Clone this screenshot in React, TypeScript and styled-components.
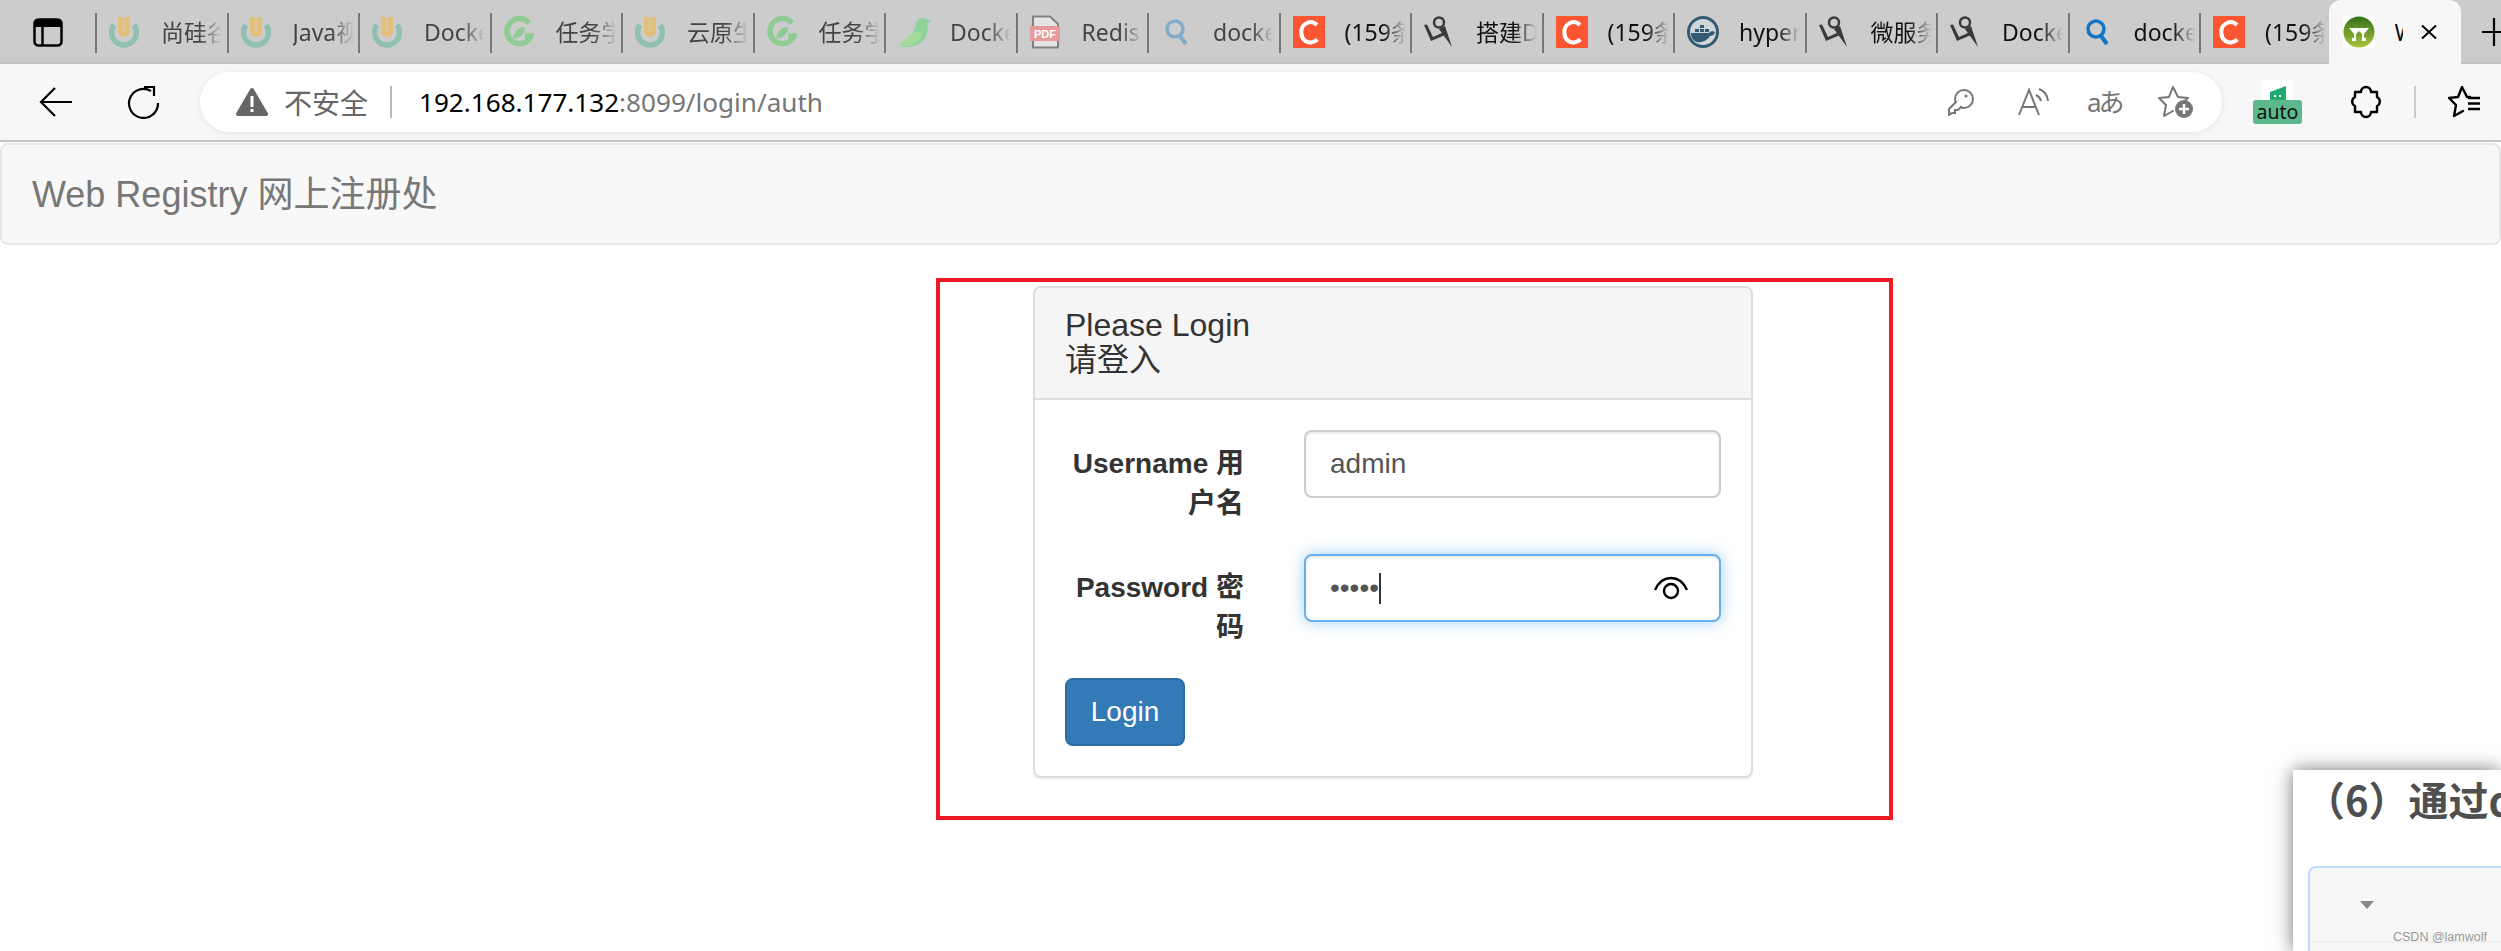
import * as React from 'react'
import styled, { createGlobalStyle } from 'styled-components'

const GlobalStyle = createGlobalStyle`
  html, body {
    margin: 0;
    padding: 0;
    background: #fff;
    font-family: "Liberation Sans", "Noto Sans CJK SC", sans-serif;
  }
`

type IconKind = 'u' | 'g' | 'bird' | 'pdf' | 'searchMuted' | 'search' | 'c' | 'y' | 'whale'

const tabs: { kind: IconKind; title: string; dim?: boolean }[] = [
  { kind: 'u', title: '尚硅谷', dim: true },
  { kind: 'u', title: 'Java视频', dim: true },
  { kind: 'u', title: 'Docker', dim: true },
  { kind: 'g', title: '任务学习', dim: true },
  { kind: 'u', title: '云原生', dim: true },
  { kind: 'g', title: '任务学习', dim: true },
  { kind: 'bird', title: 'Docker', dim: true },
  { kind: 'pdf', title: 'Redis', dim: true },
  { kind: 'searchMuted', title: 'docker', dim: true },
  { kind: 'c', title: '(159条' },
  { kind: 'y', title: '搭建D' },
  { kind: 'c', title: '(159条' },
  { kind: 'whale', title: 'hyper' },
  { kind: 'y', title: '微服务' },
  { kind: 'y', title: 'Docker' },
  { kind: 'search', title: 'docker' },
  { kind: 'c', title: '(159条' },
]

const Favicon = ({ kind }: { kind: IconKind }) => {
  switch (kind) {
    case 'u':
      return (
        <svg width="30" height="32" viewBox="0 0 30 32">
          <path d="M5 9 A12.500 12.500 0 1 0 25 9" fill="none" stroke="#8fc0b0" strokeWidth="5.500" />
          <path d="M9 1 V15 a6 6 0 0 0 12 0 V1 Z" fill="#e4bf7a" />
          <path d="M13.500 1 V14 a1.500 1.500 0 0 0 3 0 V1 Z" fill="#dcc596" />
        </svg>
      )
    case 'g':
      return (
        <svg width="30" height="32" viewBox="0 0 30 32">
          <path d="M25 7 A12.500 12.500 0 1 0 27 20 L21 20" fill="none" stroke="#90cb94" strokeWidth="5.500" />
          <path d="M9 22 C11 14 16 11 21 11 C21 18 16 23 9 22 Z" fill="#90cb94" />
        </svg>
      )
    case 'bird':
      return (
        <svg width="34" height="32" viewBox="0 0 34 32">
          <path d="M1 31 C10 27 15 18 18 8 C19 2 25 1 28 3 L33 5 L29 8 C32 20 24 30 11 31 Z" fill="#8ed39b" />
          <path d="M1 31 C7 21 15 15 24 16 C24 25 15 31 1 31 Z" fill="#a3da9b" />
        </svg>
      )
    case 'pdf':
      return (
        <svg width="30" height="34" viewBox="0 0 30 34">
          <path d="M3 1.500 H20 L28 9 V32.500 H3 Z" fill="#e4e4e4" stroke="#808080" strokeWidth="2" />
          <rect x="0" y="11" width="30" height="15" fill="#e59b9c" />
          <text x="15" y="23" textAnchor="middle" fontSize="11" fontWeight="700" fill="#fff" fontFamily="Liberation Sans">PDF</text>
        </svg>
      )
    case 'searchMuted':
    case 'search':
      return (
        <svg width="30" height="32" viewBox="0 0 30 32">
          <circle cx="14" cy="13" r="8" fill="none" stroke={kind === 'search' ? '#1476c6' : '#84abc8'} strokeWidth="3.500" />
          <path d="M19 20 L25 28" stroke={kind === 'search' ? '#1476c6' : '#84abc8'} strokeWidth="4" />
        </svg>
      )
    case 'c':
      return (
        <svg width="32" height="32" viewBox="0 0 32 32">
          <rect width="32" height="32" fill="#fc5531" />
          <path d="M24 9 C21 6 17 5.500 14 7 C9 9 8 14 8.500 18 C9 24 14 27 18 26.500 C21 26 23 25 24.500 23.500" fill="none" stroke="#fff" strokeWidth="4" />
        </svg>
      )
    case 'y':
      return (
        <svg width="29" height="32" viewBox="0 0 29 32">
          <circle cx="15" cy="6.500" r="5" fill="none" stroke="#3a3a3a" strokeWidth="2.500" />
          <path d="M0 9 L3 8.500 L9 21 L20 16 L21 19 L7 25 Z" fill="#3a3a3a" />
          <path d="M15 13 L21 10 L28 31 L20 20 Z" fill="#3a3a3a" />
        </svg>
      )
    case 'whale':
      return (
        <svg width="32" height="32" viewBox="0 0 32 32">
          <circle cx="16" cy="16" r="14.500" fill="#cfd6da" stroke="#345a72" strokeWidth="3" />
          <path d="M4 17 H22 C24 15 26 15 28 16 C27 19 25 20 23 20 C20 25 14 27 10 26 C6 25 4 21 4 17 Z" fill="#345a72" />
          <path d="M8 13 h4 v3 h-4 Z M13 13 h4 v3 h-4 Z M18 13 h4 v3 h-4 Z M13 9 h4 v3 h-4 Z" fill="#345a72" />
        </svg>
      )
  }
}

const ActiveFavicon = () => (
  <svg width="32" height="32" viewBox="0 0 32 32">
    <defs>
      <linearGradient id="activeLeaf" x1="0" y1="0" x2="0" y2="1">
        <stop offset="0" stopColor="#33701a" />
        <stop offset="1" stopColor="#a9c63c" />
      </linearGradient>
    </defs>
    <rect width="32" height="32" fill="#fff" />
    <circle cx="16" cy="16" r="15.500" fill="url(#activeLeaf)" />
    <path d="M6 12 H26 L21 18 V22 H23 V25 H19 V18 L16 15 L13 18 V25 H9 V22 H11 V18 Z" fill="#fff" />
  </svg>
)

const TabStrip = styled.div`
  display: flex;
  align-items: stretch;
  height: 64px;
  background: #ccc;
  box-shadow: inset 0 -2px 2px -1px #b8b8b8;
`

const WindowSlot = styled.div`
  width: 95px;
  flex: none;
  display: flex;
  align-items: center;
  padding-left: 33px;
  box-sizing: border-box;
`

const Tab = styled.div`
  position: relative;
  width: 131.5px;
  flex: none;
  display: flex;
  align-items: center;
  box-sizing: border-box;
  padding-left: 14px;
  &::before {
    content: '';
    position: absolute;
    left: 0;
    top: 13px;
    bottom: 11px;
    width: 2px;
    background: #777;
  }
`

const IconSlot = styled.div`
  width: 52px;
  height: 34px;
  flex: none;
  display: flex;
  align-items: center;
`

const TabTitle = styled.div<{ $dim?: boolean }>`
  width: 61px;
  overflow: hidden;
  white-space: nowrap;
  font-family: "Noto Sans", "Noto Sans CJK SC", sans-serif;
  font-size: 23px;
  line-height: 34px;
  color: ${p => (p.$dim ? '#444' : '#111')};
  mask-image: linear-gradient(to right, #000 62%, transparent 100%);
`

const ActiveTab = styled.div`
  position: relative;
  width: 132px;
  flex: none;
  margin-left: -2px;
  height: 64px;
  background: #f7f7f7;
  border-radius: 12px 12px 0 0;
  display: flex;
  align-items: center;
  box-sizing: border-box;
  padding-left: 14px;
`

const ActiveTitle = styled.div`
  width: 8px;
  margin: 0 18px 0 20px;
  overflow: hidden;
  white-space: nowrap;
  font-family: "Noto Sans", sans-serif;
  font-size: 23px;
  color: #111;
  flex: none;
`

const NewTab = styled.div`
  flex: 1;
  display: flex;
  align-items: center;
  padding-left: 21px;
`

const Toolbar = styled.div`
  display: flex;
  align-items: center;
  height: 76px;
  background: #f7f7f7;
  border-bottom: 2px solid #c4c4c4;
`

const NavSlot = styled.div<{ $width: number; $before?: number; $after?: number }>`
  width: ${p => p.$width}px;
  margin-left: ${p => p.$before ?? 0}px;
  margin-right: ${p => p.$after ?? 0}px;
  flex: none;
  display: flex;
  align-items: center;
  justify-content: center;
`

const AddressBar = styled.div`
  width: 2022px;
  height: 60px;
  flex: none;
  display: flex;
  align-items: center;
  background: #fff;
  border-radius: 30px;
  box-shadow: 0 1px 6px rgba(0, 0, 0, 0.08);
  padding-left: 36px;
  box-sizing: border-box;
  font-family: "Noto Sans", "Noto Sans CJK SC", sans-serif;
`

const Insecure = styled.span`
  margin-left: 16px;
  font-size: 28px;
  color: #666;
  white-space: nowrap;
`

const Divider = styled.div`
  width: 2px;
  height: 32px;
  margin: 0 27px 0 22px;
  background: #bbb;
`

const Url = styled.div`
  font-family: "Noto Sans", sans-serif;
  font-size: 26.100px;
  color: #767676;
  white-space: nowrap;
  b {
    font-weight: 400;
    color: #000;
  }
`

const AddressActions = styled.div`
  margin-left: auto;
  margin-right: 28px;
  display: flex;
  align-items: center;
  gap: 37px;
`

const Translate = styled.span`
  width: 34px;
  font-family: "Noto Sans", "Noto Sans CJK JP", sans-serif;
  font-size: 26px;
  line-height: 30px;
  color: #767676;
  letter-spacing: -3px;
  white-space: nowrap;
`

const AutoExtension = styled.div`
  width: 49px;
  margin-left: 31px;
  flex: none;
  display: flex;
  flex-direction: column;
  align-items: center;
`

const AutoIcon = styled.div`
  width: 31px;
  height: 20px;
  background: #fff;
  display: flex;
  align-items: flex-end;
  justify-content: center;
`

const AutoBadge = styled.div`
  width: 49px;
  height: 24px;
  background: #5bb98c;
  border-radius: 3px;
  text-align: center;
  font-family: "Noto Sans", sans-serif;
  font-size: 19.500px;
  line-height: 23px;
  color: #111;
`

const ToolbarDivider = styled.div`
  width: 2px;
  height: 32px;
  background: #ccc;
  flex: none;
  margin: 0 32px 0 8px;
`

const Navbar = styled.div`
  height: 102px;
  margin-top: 1px;
  box-sizing: border-box;
  background: #f8f8f8;
  border: 2px solid #e7e7e7;
  border-radius: 8px;
  display: flex;
  align-items: center;
  padding: 0 0 7px 30px;
  font-size: 36px;
  color: #777;
`

const Page = styled.div`
  position: relative;
  width: 2501px;
  height: 951px;
  overflow: hidden;
  background: #fff;
`

const Content = styled.div`
  margin: 41px 0 0 1033px;
  width: 720px;
`

const Panel = styled.div`
  box-sizing: border-box;
  border: 2px solid #ddd;
  border-radius: 8px;
  background: #fff;
  box-shadow: 0 2px 2px rgba(0, 0, 0, 0.05);
  overflow: hidden;
`

const PanelHeading = styled.div`
  padding: 20px 30px;
  background: #f5f5f5;
  border-bottom: 2px solid #ddd;
  font-size: 32px;
  line-height: 35px;
  color: #333;
`

const PanelBody = styled.div`
  padding: 30px;
`

const FormRow = styled.div`
  display: grid;
  grid-template-columns: 179px 1fr;
  column-gap: 60px;
  margin-bottom: 30px;
`

const FieldLabel = styled.label`
  padding-top: 14px;
  text-align: right;
  font-size: 28px;
  line-height: 40px;
  font-weight: 700;
  color: #333;
`

const Field = styled.div<{ $focused?: boolean }>`
  position: relative;
  box-sizing: border-box;
  height: 68px;
  padding: 0 24px;
  display: flex;
  align-items: center;
  background: #fff;
  border: 2px solid ${p => (p.$focused ? '#66afe9' : '#ccc')};
  border-radius: 8px;
  font-size: 28px;
  color: #555;
  box-shadow: inset 0 2px 2px rgba(0, 0, 0, 0.075)
    ${p => (p.$focused ? ', 0 0 16px rgba(102, 175, 233, 0.6)' : '')};
`

const Caret = styled.span`
  width: 2px;
  height: 31px;
  background: #333;
`

const RevealButton = styled.span`
  margin-left: auto;
  margin-right: 6px;
  display: flex;
`

const LoginButton = styled.button`
  display: block;
  width: 120px;
  height: 68px;
  padding: 0;
  background: #337ab7;
  border: 2px solid #2e6da4;
  border-radius: 8px;
  font-family: inherit;
  font-size: 28px;
  color: #fff;
`

const Annotation = styled.div`
  position: absolute;
  left: 936px;
  top: 278px;
  width: 957px;
  height: 542px;
  box-sizing: border-box;
  border: 4px solid #ed1c24;
  pointer-events: none;
`

const SideWindow = styled.div`
  position: absolute;
  left: 2293px;
  top: 770px;
  width: 208px;
  height: 181px;
  padding-left: 15px;
  box-sizing: border-box;
  overflow: hidden;
  background: #fff;
  box-shadow: 0 0 18px rgba(0, 0, 0, 0.55);
`

const SideHeading = styled.div`
  margin: 4px 0 0 -3px;
  height: 50px;
  white-space: nowrap;
  font-family: "Noto Sans CJK SC", sans-serif;
  font-size: 40px;
  line-height: 50px;
  font-weight: 700;
  color: #4f4f4f;
`

const CodeBox = styled.div`
  margin-top: 42px;
  width: 300px;
  height: 120px;
  box-sizing: border-box;
  background: #f7f7f7;
  border: 2px solid #bfdcff;
  border-radius: 8px;
  padding: 33px 0 0 50px;
`

const CodeArrow = styled.div`
  width: 0;
  height: 0;
  border-left: 7px solid transparent;
  border-right: 7px solid transparent;
  border-top: 8px solid #888;
`

const CodeRule = styled.div`
  margin: 32px 0 0 -50px;
  height: 2px;
  background: #eee;
`

const Watermark = styled.div`
  position: absolute;
  left: 100px;
  top: 160px;
  font-size: 12.500px;
  line-height: 14px;
  color: #999;
  white-space: nowrap;
`

export default function App() {
  return (
    <Page>
      <GlobalStyle />
      <TabStrip>
        <WindowSlot>
          <svg width="30" height="29" viewBox="0 0 30 29">
            <rect x="1.500" y="1.500" width="27" height="26" rx="4" fill="none" stroke="#000" strokeWidth="2.500" />
            <path d="M1.500 9 V5.500 a4 4 0 0 1 4 -4 H24.500 a4 4 0 0 1 4 4 V9 Z" fill="#000" />
            <path d="M9.500 9 V27" stroke="#000" strokeWidth="2.500" />
          </svg>
        </WindowSlot>
        {tabs.map((t, i) => (
          <Tab key={i}>
            <IconSlot>
              <Favicon kind={t.kind} />
            </IconSlot>
            <TabTitle $dim={t.dim}>{t.title}</TabTitle>
          </Tab>
        ))}
        <ActiveTab>
          <ActiveFavicon />
          <ActiveTitle>Web Registry</ActiveTitle>
          <svg width="16" height="14" viewBox="0 0 16 14">
            <path d="M1 0.500 L15 13.500 M15 0.500 L1 13.500" stroke="#000" strokeWidth="2" />
          </svg>
        </ActiveTab>
        <NewTab>
          <svg width="24" height="28" viewBox="0 0 24 28">
            <path d="M12 0 V28 M0 14 H24" stroke="#000" strokeWidth="2.200" />
          </svg>
        </NewTab>
      </TabStrip>

      <Toolbar>
        <NavSlot $width={112}>
          <svg width="34" height="30" viewBox="0 0 34 30">
            <path d="M16 1 L2 15 L16 29 M2 15 H33" fill="none" stroke="#000" strokeWidth="2.200" />
          </svg>
        </NavSlot>
        <NavSlot $width={64} $after={24}>
          <svg width="34" height="34" viewBox="0 0 34 34">
            <path d="M24 6 A14.500 14.500 0 1 0 31 18" fill="none" stroke="#000" strokeWidth="2.200" />
            <path d="M17 2 H27 V11" fill="none" stroke="#000" strokeWidth="2.200" />
          </svg>
        </NavSlot>
        <AddressBar>
          <svg width="32" height="30" viewBox="0 0 32 30">
            <path d="M16 3 L30 27 H2 Z" fill="#666" stroke="#666" strokeWidth="4" strokeLinejoin="round" />
            <rect x="14.500" y="9" width="3" height="11" fill="#fff" />
            <rect x="14.500" y="22" width="3" height="3" fill="#fff" />
          </svg>
          <Insecure>不安全</Insecure>
          <Divider />
          <Url>
            <b>192.168.177.132</b>:8099/login/auth
          </Url>
          <AddressActions>
            <svg width="34" height="28" viewBox="0 0 34 28">
              <path d="M17 2 a9 9 0 0 1 0 18 c-1 0 -2 0 -3 -1 L11 22 H8 V25 H5 L2 27 V21 L9 14 c-1 -1 -1 -2 -1 -3 A9 9 0 0 1 17 2 Z" fill="none" stroke="#767676" strokeWidth="2" />
              <circle cx="19" cy="8" r="1.500" fill="#767676" />
            </svg>
            <svg width="32" height="28" viewBox="0 0 32 28">
              <path d="M1 27 L11 2 L21 27 M5 19 H17" fill="none" stroke="#767676" strokeWidth="2" />
              <path d="M18 7 a9 9 0 0 1 5 6 M21 1 a14 14 0 0 1 9 12" fill="none" stroke="#767676" strokeWidth="2" />
            </svg>
            <Translate>aあ</Translate>
            <svg width="36" height="32" viewBox="0 0 36 32">
              <path d="M24 17 L30 12 L20 11 L15 1 L11 11 L1 12 L8 19 L6 30 L15 25" fill="none" stroke="#767676" strokeWidth="2" strokeLinejoin="round" strokeLinecap="round" />
              <circle cx="26" cy="23" r="9" fill="#767676" />
              <path d="M26 18 V28 M21 23 H31" stroke="#fff" strokeWidth="2.500" />
            </svg>
          </AddressActions>
        </AddressBar>
        <AutoExtension>
          <AutoIcon>
            <svg width="16" height="14" viewBox="0 0 16 14">
              <path d="M0 14 V6 L16 0 V14 Z" fill="#1faa6e" />
              <rect x="4" y="9" width="2" height="2" fill="#fff" />
              <rect x="9" y="9" width="2" height="2" fill="#fff" />
            </svg>
          </AutoIcon>
          <AutoBadge>auto</AutoBadge>
        </AutoExtension>
        <NavSlot $width={80} $before={24}>
          <svg width="34" height="34" viewBox="-1 0 34 34">
            <path d="M11 7 a5 5 0 0 1 10 0 h6 v5 a5 5 0 0 1 0 9 v6 h-6 a5 5 0 0 1 -10 0 h-6 v-6 a5 5 0 0 1 0 -9 v-5 h6 z" fill="none" stroke="#000" strokeWidth="2.400" strokeLinejoin="round" />
          </svg>
        </NavSlot>
        <ToolbarDivider />
        <svg width="34" height="32" viewBox="0 0 34 32">
          <path d="M22 11 L19 11 L14 1 L10 11 L1 12 L8 19 L6 30 L15 25" fill="none" stroke="#000" strokeWidth="2.400" strokeLinejoin="round" strokeLinecap="round" />
          <path d="M20 12 H32 M20 17.500 H32 M20 23 H32" stroke="#000" strokeWidth="2.400" />
        </svg>
      </Toolbar>

      <Navbar>Web Registry 网上注册处</Navbar>

      <Content>
        <Panel>
          <PanelHeading>
            Please Login
            <br />
            请登入
          </PanelHeading>
          <PanelBody>
            <FormRow>
              <FieldLabel>Username 用户名</FieldLabel>
              <Field>admin</Field>
            </FormRow>
            <FormRow>
              <FieldLabel>Password 密码</FieldLabel>
              <Field $focused>
                •••••
                <Caret />
                <RevealButton>
                  <svg width="36" height="24" viewBox="0 0 36 24">
                    <path d="M2 14 C6 5 12 2 18 2 C24 2 30 5 34 14" fill="none" stroke="#000" strokeWidth="2.400" />
                    <circle cx="18" cy="15" r="7" fill="none" stroke="#000" strokeWidth="2.400" />
                  </svg>
                </RevealButton>
              </Field>
            </FormRow>
            <LoginButton>Login</LoginButton>
          </PanelBody>
        </Panel>
      </Content>

      <Annotation />

      <SideWindow>
        <SideHeading>（6）通过docker</SideHeading>
        <CodeBox>
          <CodeArrow />
          <CodeRule />
        </CodeBox>
        <Watermark>CSDN @lamwolf</Watermark>
      </SideWindow>
    </Page>
  )
}
